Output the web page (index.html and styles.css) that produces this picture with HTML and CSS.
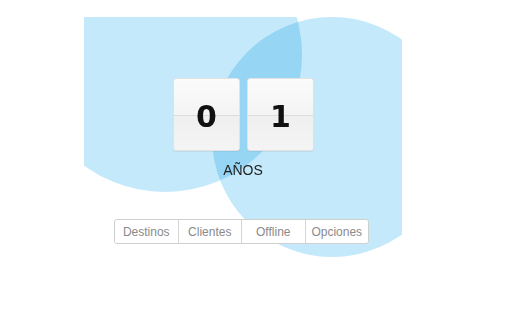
FILE: index.html
```html
<!DOCTYPE html>
<html lang="es">
<head>
    <meta charset="UTF-8">
    <meta name="viewport" content="width=device-width, initial-scale=1.0">
    <title>Contador</title>
    <link rel="stylesheet" href="styles.css">
</head>
<body>
    <div class="stage">
        <div class="blob blob-left"></div>
        <div class="blob blob-right"></div>

        <div class="clock">
            <div class="digits">
                <div class="flip">0</div>
                <div class="flip">1</div>
            </div>
            <div class="label">AÑOS</div>
        </div>

        <div class="menu">
            <button>Destinos</button>
            <button>Clientes</button>
            <button>Offline</button>
            <button>Opciones</button>
        </div>
    </div>
</body>
</html>
```

FILE: styles.css
```css
body {
    margin: 8px;
    background-color: #fff;
    font-family: 'Liberation Sans', Arial, sans-serif;
}

.stage {
    position: relative;
    width: 318px;
    height: 240px;
    margin: 9px 0 0 76px;
    overflow: hidden;
}

.blob {
    position: absolute;
    border-radius: 50%;
    background-color: #c4e9fa;
    mix-blend-mode: multiply;
}

.blob-left {
    left: -56px;
    top: -99px;
    width: 274px;
    height: 274px;
}

.blob-right {
    left: 128px;
    top: 0;
    width: 240px;
    height: 240px;
}

.clock {
    position: relative;
    padding-top: 61px;
    text-align: center;
}

.digits {
    display: flex;
    justify-content: center;
    gap: 7px;
    margin-left: 1px;
}

/* split line sits in the background so the digit covers it */
.flip {
    width: 67px;
    height: 73px;
    line-height: 75px;
    font-family: 'DejaVu Sans', sans-serif;
    font-weight: bold;
    font-size: 30px;
    color: #111;
    background: linear-gradient(#fbfbfb, #f4f4f4 36px, #dcdcdc 36px, #dcdcdc 37px, #efefef 37px, #f4f4f4);
    border: 1px solid #e2e2e2;
    border-radius: 3px;
    box-sizing: border-box;
    box-shadow: 0 1px 1px rgba(0, 0, 0, 0.06);
}

.label {
    margin-top: 11px;
    font-size: 14px;
    line-height: 16px;
    color: #222;
}

.menu {
    position: relative;
    display: flex;
    width: 255px;
    margin: 41px 0 0 30px;
    border: 1px solid #cfcfcf;
    border-radius: 3px;
    background-color: #fff;
    box-sizing: border-box;
}

.menu button {
    flex: 1;
    height: 23px;
    padding: 0;
    border: none;
    border-left: 1px solid #d6d6d6;
    background-color: #fff;
    font-family: 'Liberation Sans', Arial, sans-serif;
    font-size: 12px;
    color: #8a8a8a;
    cursor: pointer;
}

.menu button:first-child {
    border-left: none;
    border-radius: 3px 0 0 3px;
}

.menu button:last-child {
    border-radius: 0 3px 3px 0;
}
```
